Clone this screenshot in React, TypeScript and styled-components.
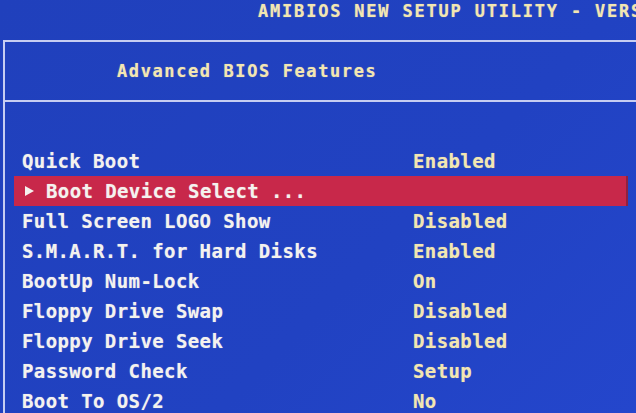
import React from "react";
import styled, { createGlobalStyle } from "styled-components";

const Global = createGlobalStyle`
  html, body { margin: 0; padding: 0; }
  body {
    width: 636px;
    height: 413px;
    overflow: hidden;
    background: #2142c0;
    font-family: "DejaVu Sans Mono", "Liberation Mono", monospace;
    font-weight: bold;
  }
`;

const Screen = styled.div`
  width: 636px;
  height: 413px;
  overflow: hidden;
  background: linear-gradient(135deg, #2040bc 0%, #2142c2 60%, #2446cc 100%);
`;

const TitleBar = styled.div`
  height: 40px;
  padding-left: 258px;
  box-sizing: border-box;
  white-space: nowrap;
  overflow: hidden;
  font-size: 17px;
  letter-spacing: 1.8px;
  line-height: 22px;
  color: #f2e6b2;
  text-shadow: 0 0 1px rgba(242, 230, 178, 0.6);
`;

const Frame = styled.div`
  margin-left: 3px;
  border-top: 2px solid #c6cdf2;
  border-left: 2px solid #c6cdf2;
  height: 380px;
`;

const Header = styled.div`
  height: 58px;
  border-bottom: 2px solid #c6cdf2;
  display: flex;
  align-items: center;
  padding-left: 112px;
  font-size: 17px;
  letter-spacing: 1.6px;
  color: #f2e6b2;
  text-shadow: 0 0 1px rgba(242, 230, 178, 0.6);
`;

const List = styled.div`
  padding-top: 44px;
  display: flex;
  flex-direction: column;
`;

const Row = styled.div<{ $selected?: boolean }>`
  height: 30px;
  margin-left: 9px;
  width: 614px;
  box-sizing: border-box;
  display: grid;
  grid-template-columns: 391px 1fr;
  align-items: center;
  padding-left: 8px;
  font-size: 19px;
  letter-spacing: 0.4px;
  background: ${(p) => (p.$selected ? "#c8284a" : "transparent")};
  box-shadow: ${(p) => (p.$selected ? "inset -2px 0 0 #8e2140" : "none")};
`;

const Label = styled.span`
  display: flex;
  align-items: center;
  color: #f4f2ee;
  white-space: nowrap;
  text-shadow: 0 0 1px rgba(255, 255, 255, 0.5);
`;

const Value = styled.span`
  color: #f2e6b2;
  white-space: nowrap;
  text-shadow: 0 0 1px rgba(242, 230, 178, 0.5);
`;

const Arrow = styled.span`
  display: inline-block;
  width: 0;
  height: 0;
  border-top: 5.5px solid transparent;
  border-bottom: 5.5px solid transparent;
  border-left: 9px solid #f4f2ee;
  margin-left: 3px;
  margin-right: 12px;
`;

const items: { label: string; value?: string; sub?: boolean }[] = [
  { label: "Quick Boot", value: "Enabled" },
  { label: "Boot Device Select ...", sub: true },
  { label: "Full Screen LOGO Show", value: "Disabled" },
  { label: "S.M.A.R.T. for Hard Disks", value: "Enabled" },
  { label: "BootUp Num-Lock", value: "On" },
  { label: "Floppy Drive Swap", value: "Disabled" },
  { label: "Floppy Drive Seek", value: "Disabled" },
  { label: "Password Check", value: "Setup" },
  { label: "Boot To OS/2", value: "No" },
];

export default function App() {
  return (
    <Screen>
      <Global />
      <TitleBar>AMIBIOS NEW SETUP UTILITY - VERSION 3.31a</TitleBar>
      <Frame>
        <Header>Advanced BIOS Features</Header>
        <List>
          {items.map((it) => (
            <Row key={it.label} $selected={it.sub}>
              <Label>
                {it.sub && <Arrow />}
                {it.label}
              </Label>
              <Value>{it.value ?? ""}</Value>
            </Row>
          ))}
        </List>
      </Frame>
    </Screen>
  );
}
